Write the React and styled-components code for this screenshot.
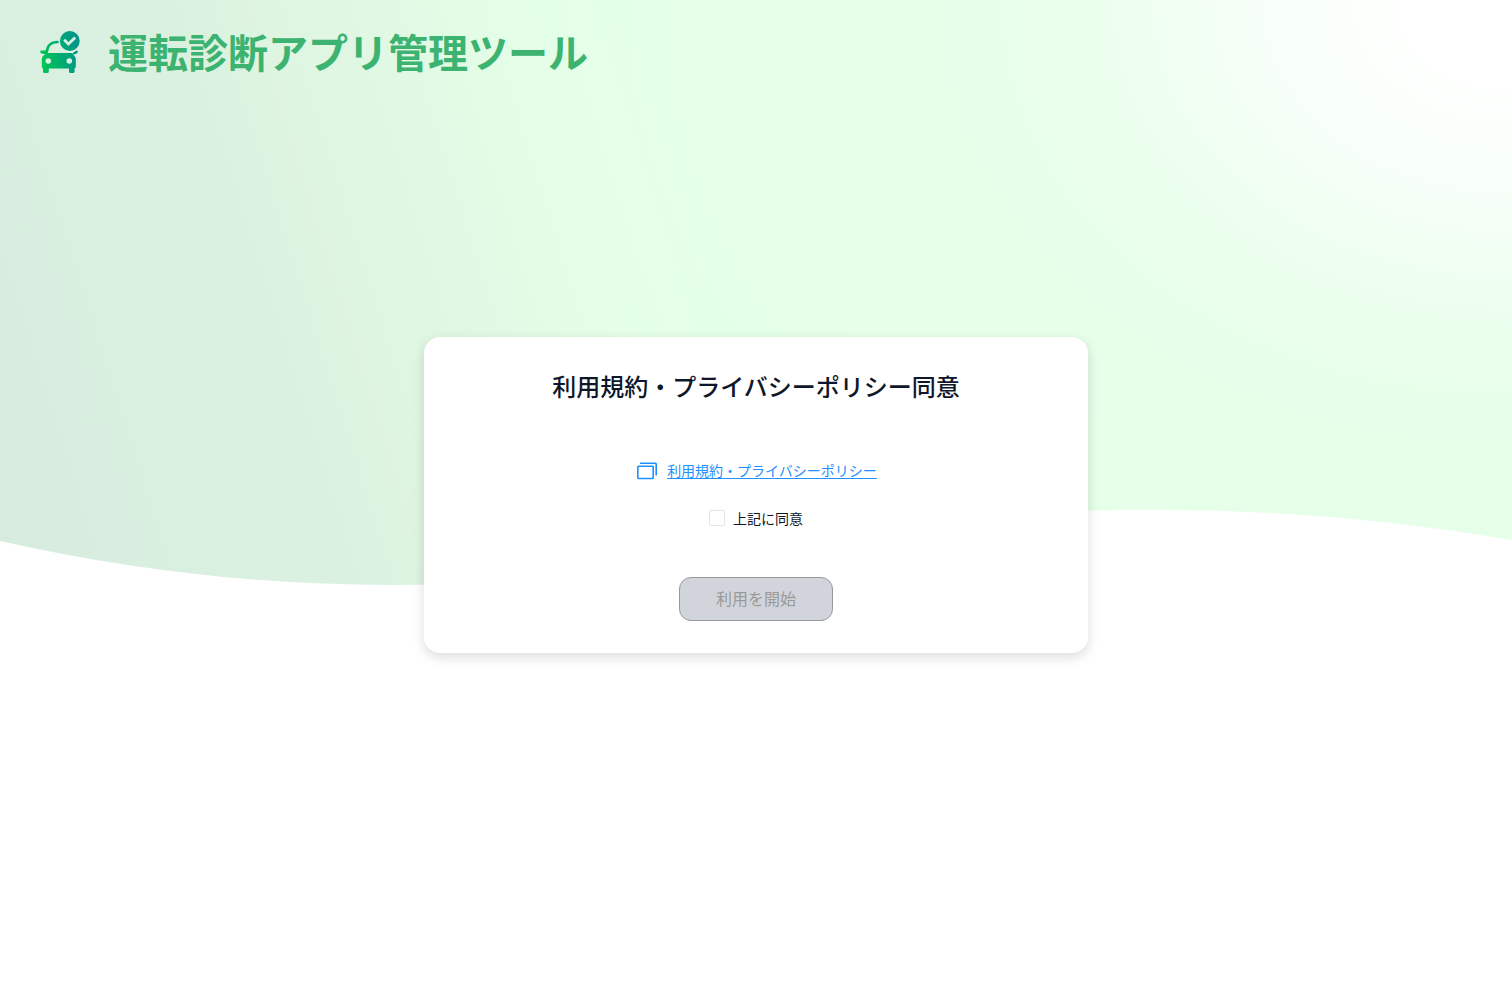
import React, { useState } from 'react'
import styled, { createGlobalStyle } from 'styled-components'

const GlobalStyle = createGlobalStyle`
  * {
    box-sizing: border-box;
  }

  body {
    margin: 0;
    background: #fff;
    color: #0f172a;
    font-family: "Noto Sans CJK JP", sans-serif;
  }
`

const Page = styled.div`
  position: relative;
  display: flex;
  flex-direction: column;
  min-height: 100vh;
`

const Wave = styled.svg`
  position: absolute;
  top: 0;
  left: 0;
  z-index: -1;
  width: 100%;
  height: 586px;
`

const Header = styled.header`
  display: flex;
  align-items: center;
  gap: 28px;
  height: 102px;
  padding: 0 40px;
`

const Logo = styled.svg`
  flex: none;
  width: 40px;
  height: 44px;
`

const Title = styled.h1`
  margin: 0;
  color: #3cb371;
  font-size: 40px;
  font-weight: 700;
  line-height: 60px;
`

const Main = styled.main`
  display: flex;
  flex: 1;
  align-items: center;
  justify-content: center;
  padding: 0 24px 94px;
`

const Card = styled.form`
  display: flex;
  flex-direction: column;
  align-items: center;
  width: 100%;
  max-width: 664px;
  padding: 32px;
  border-radius: 16px;
  background: #fff;
  box-shadow: 0 4px 12px rgba(15, 23, 42, 0.15);
`

const Heading = styled.h2`
  margin: 0 0 55px;
  font-size: 24px;
  font-weight: 500;
  line-height: 34px;
`

const PolicyLink = styled.a`
  display: flex;
  align-items: center;
  gap: 8px;
  margin-bottom: 26px;
  color: #1e90ff;
  font-size: 14px;
  line-height: 20px;
  text-decoration: none;

  span {
    text-decoration: underline 1px;
    text-decoration-skip-ink: none;
    text-underline-offset: 2px;
  }
`

const LinkIcon = styled.svg`
  width: 24px;
  height: 24px;
  fill: none;
  stroke: currentColor;
  stroke-width: 1.6px;
`

const Agreement = styled.label`
  display: flex;
  align-items: center;
  gap: 8px;
  margin-bottom: 49px;
  font-size: 14px;
  line-height: 20px;
`

const Checkbox = styled.input.attrs({ type: 'checkbox' })`
  appearance: none;
  width: 16px;
  height: 16px;
  margin: 0;
  border: 1px solid #e2e4e8;
  border-radius: 2px;
  background: #fff;

  &:checked {
    border-color: #3cb371;
    background: #3cb371;
  }
`

const StartButton = styled.button`
  height: 44px;
  padding: 0 36px 2px;
  border: 1px solid #3cb371;
  border-radius: 12px;
  background: #3cb371;
  color: #fff;
  font-family: inherit;
  font-size: 16px;
  line-height: 24px;

  &:disabled {
    border-color: #96999e;
    background: #d1d5db;
    color: #999;
  }
`

const wavePath = 'M0 0H1512V540Q1134 476 756 547Q378 626 0 541Z'

const Background = () => (
  <Wave viewBox="0 0 1512 586" preserveAspectRatio="none" aria-hidden="true">
    <defs>
      <linearGradient id="base" gradientUnits="userSpaceOnUse" x1="0" y1="440" x2="700" y2="220">
        <stop offset="0" stopColor="#d7ecde" />
        <stop offset="0.18" stopColor="#d9efe0" />
        <stop offset="0.4" stopColor="#dbf1e0" />
        <stop offset="0.55" stopColor="#dff6e2" />
        <stop offset="0.85" stopColor="#e4fee7" />
        <stop offset="1" stopColor="#e3ffe6" />
      </linearGradient>
      <radialGradient id="light" gradientUnits="userSpaceOnUse" cx="0" cy="0" r="1" gradientTransform="translate(1512 0) scale(1040 806)">
        <stop offset="0.09" stopColor="#fff" />
        <stop offset="0.25" stopColor="#fff" stopOpacity="0.69" />
        <stop offset="0.37" stopColor="#fff" stopOpacity="0.36" />
        <stop offset="0.5" stopColor="#fff" stopOpacity="0.16" />
        <stop offset="0.65" stopColor="#fff" stopOpacity="0.1" />
        <stop offset="0.85" stopColor="#fff" stopOpacity="0.06" />
        <stop offset="1" stopColor="#fff" stopOpacity="0" />
      </radialGradient>
    </defs>
    <path fill="url(#base)" d={wavePath} />
    <path fill="url(#light)" d={wavePath} />
  </Wave>
)

const CarLogo = () => (
  <Logo viewBox="0 -1 40 44" aria-hidden="true">
    <defs>
      <linearGradient id="car" x1="0" y1="0.6" x2="1" y2="0.4">
        <stop offset="0.05" stopColor="#00c455" />
        <stop offset="0.9" stopColor="#009688" />
      </linearGradient>
    </defs>
    <mask id="carMask">
      <path fill="#fff" d="M6.5 23H32L34.5 26Q35.8 27.5 35.8 29V36.5Q35.8 38 34.6 38.3V41.5Q34.6 43 33.2 43H30.4Q29 43 29 41.5V38.4H8.8V41.5Q8.8 43 7.4 43H4.4Q3 43 3 41.5V38.3Q1.8 38 1.8 36.5V29Q1.8 27.5 3 26Z" />
      <path fill="#fff" d="M1.2 20.6H6V24H4Q0.2 23.6 0.2 22Q0.2 20.6 1.2 20.6ZM32.2 23.4L36.3 20.6Q37.8 20.6 37.8 22Q37.8 23.4 34 24.6Z" />
      <path fill="none" stroke="#fff" strokeWidth="2.6" strokeLinecap="round" d="M6.6 22.5C7.2 16 10.5 12 17.5 12" />
      <circle cx="29.8" cy="11" r="9.9" fill="#fff" />
      <path fill="none" stroke="#000" strokeWidth="2.8" d="M24.2 9.8L28.4 14L35.2 7.4" />
      <circle cx="8.3" cy="31" r="2.8" fill="#000" />
      <circle cx="29.3" cy="31" r="2.8" fill="#000" />
    </mask>
    <rect y="-1" width="40" height="45" fill="url(#car)" mask="url(#carMask)" />
  </Logo>
)

const App = () => {
  const [agreed, setAgreed] = useState(false)

  return (
    <Page>
      <GlobalStyle />
      <Background />
      <Header>
        <CarLogo />
        <Title>運転診断アプリ管理ツール</Title>
      </Header>
      <Main>
        <Card onSubmit={e => e.preventDefault()}>
          <Heading>利用規約・プライバシーポリシー同意</Heading>
          <PolicyLink href="#policy">
            <LinkIcon viewBox="0 0 24 24" aria-hidden="true">
              <rect x="2.8" y="8.3" width="15.4" height="12.2" rx="0.8" />
              <path d="M5 5.3H20.4Q21.2 5.3 21.2 6.1V17.6" />
            </LinkIcon>
            <span>利用規約・プライバシーポリシー</span>
          </PolicyLink>
          <Agreement>
            <Checkbox checked={agreed} onChange={e => setAgreed(e.target.checked)} />
            上記に同意
          </Agreement>
          <StartButton type="submit" disabled={!agreed}>利用を開始</StartButton>
        </Card>
      </Main>
    </Page>
  )
}

export default App
